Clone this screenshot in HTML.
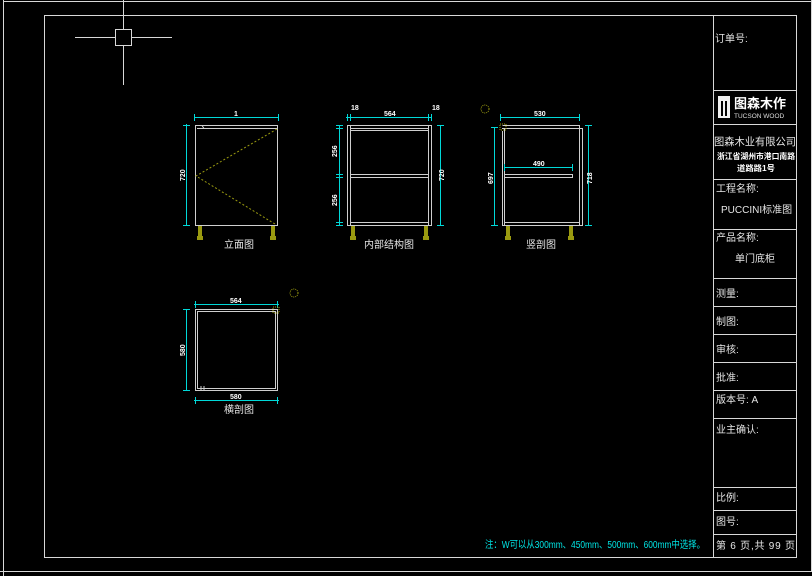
<!DOCTYPE html>
<html><head><meta charset="utf-8"><style>
html,body{margin:0;padding:0;background:#000;}
svg{display:block}
text{font-family:"Liberation Sans","Noto Sans CJK SC",sans-serif;fill:#e6e6e6;font-size:10px}
.c{fill:#00e5e5}
</style></head><body>
<svg width="812" height="576" viewBox="0 0 812 576" xmlns="http://www.w3.org/2000/svg">
<g fill="none" stroke="#d8d8d8" stroke-width="1">
<path d="M3.5 0V576M3.5 1.5H812M811.5 0V572"/>
<path d="M0 571.5H812"/>
<rect x="44.5" y="15.5" width="752" height="542"/>
<path d="M713.5 15V557"/>
<path d="M713 90.5H797M713 124.5H797M713 179.5H797M713 229.5H797M713 278.5H797M713 306.5H797M713 334.5H797M713 362.5H797M713 390.5H797M713 418.5H797M713 487.5H797M713 510.5H797M713 534.5H797"/>
<path d="M123.5 0V85M75 37.5H172"/>
<rect x="115.5" y="29.5" width="16" height="16" fill="#000"/>
</g>
<g fill="none" stroke="#cfcfcf" stroke-width="1">
<rect x="195.5" y="125.5" width="82" height="100"/>
<path d="M197 128.5H277M202 125.5L204 128.5"/>
<rect x="347.5" y="125.5" width="84" height="100"/>
<path d="M350.5 126V225M428.5 126V225M350 128.5H429M350 130.5H429M350 174.5H429M350 177.5H429M350 222.5H429"/>
<path d="M502.5 125.5H579.5V128.5H582.5V225.5H502.5V131M504.5 128V225M502 128.5H579M504 174.5H572.5V177.5H504M504 222.5H580M579.5 128V225"/>
<rect x="195.5" y="309.5" width="82" height="81"/>
<rect x="197.5" y="311.5" width="78" height="77"/>
<path d="M201 386V390M204 386V390"/>
</g>
<path d="M277 129L196 176L275 224" fill="none" stroke="#9a9a10" stroke-width="1" stroke-dasharray="2,2"/>
<g fill="#9a9a10">
<rect x="198" y="226" width="4" height="12"/><rect x="197" y="236" width="6" height="4"/>
<rect x="271" y="226" width="4" height="12"/><rect x="270" y="236" width="6" height="4"/>
<rect x="351" y="226" width="4" height="12"/><rect x="350" y="236" width="6" height="4"/>
<rect x="424" y="226" width="4" height="12"/><rect x="423" y="236" width="6" height="4"/>
<rect x="506" y="226" width="4" height="12"/><rect x="505" y="236" width="6" height="4"/>
<rect x="569" y="226" width="4" height="12"/><rect x="568" y="236" width="6" height="4"/>
</g>
<g fill="none" stroke="#00d8d8" stroke-width="1">
<path d="M194 117.5H279M194.5 114V121M278.5 114V121"/>
<path d="M186.5 124V226M183 125.5H190M183 225.5H190"/>
<path d="M346 117.5H432M347.5 114V121M350.5 114V121M431.5 114V121M428.5 114V121"/>
<path d="M339.5 125V226M336 125.5H343M336 128.5H343M336 174.5H343M336 177.5H343M336 222.5H343M336 225.5H343"/>
<path d="M440.5 125V226M437 125.5H444M437 225.5H444"/>
<path d="M500 117.5H580M500.5 114V121M579.5 114V121"/>
<path d="M494.5 127V226M491 127.5H498M491 225.5H498"/>
<path d="M504 167.5H573M504.5 164V171M572.5 164V171"/>
<path d="M588.5 125V226M585 125.5H592M585 225.5H592"/>
<path d="M194 304.5H279M195.5 301V308M277.5 301V308"/>
<path d="M186.5 309V391M183 309.5H190M183 390.5H190"/>
<path d="M194 400.5H279M195.5 397V404M277.5 397V404"/>
</g>
<g>
<text x="234" y="116" style="font-size:7px;font-weight:bold;fill:#fff">1</text>
<text x="384" y="116" style="font-size:7px;font-weight:bold;fill:#fff">564</text>
<text x="351" y="110" style="font-size:7px;font-weight:bold;fill:#fff">18</text>
<text x="432" y="110" style="font-size:7px;font-weight:bold;fill:#fff">18</text>
<text x="534" y="116" style="font-size:7px;font-weight:bold;fill:#fff">530</text>
<text x="533" y="166" style="font-size:7px;font-weight:bold;fill:#fff">490</text>
<text x="230" y="303" style="font-size:7px;font-weight:bold;fill:#fff">564</text>
<text x="230" y="399" style="font-size:7px;font-weight:bold;fill:#fff">580</text>
<text x="185" y="181" transform="rotate(-90 185 181)" style="font-size:7px;font-weight:bold;fill:#fff">720</text>
<text x="444" y="181" transform="rotate(-90 444 181)" style="font-size:7px;font-weight:bold;fill:#fff">720</text>
<text x="337" y="157" transform="rotate(-90 337 157)" style="font-size:7px;font-weight:bold;fill:#fff">256</text>
<text x="337" y="206" transform="rotate(-90 337 206)" style="font-size:7px;font-weight:bold;fill:#fff">256</text>
<text x="493" y="184" transform="rotate(-90 493 184)" style="font-size:7px;font-weight:bold;fill:#fff">697</text>
<text x="592" y="184" transform="rotate(-90 592 184)" style="font-size:7px;font-weight:bold;fill:#fff">718</text>
<text x="185" y="356" transform="rotate(-90 185 356)" style="font-size:7px;font-weight:bold;fill:#fff">580</text>
</g>
<g fill="none" stroke="#9a9a10" stroke-dasharray="1,1"><circle cx="485" cy="109" r="4"/><circle cx="294" cy="293" r="4"/><rect x="500" y="124" width="6" height="6"/><rect x="273" y="307" width="6" height="6"/></g>
<text x="224" y="248">立面图</text>
<text x="364" y="248">内部结构图</text>
<text x="526" y="248">竖剖图</text>
<text x="224" y="413">横剖图</text>
<text x="485" y="548" class="c" textLength="220" lengthAdjust="spacingAndGlyphs">注：W可以从300mm、450mm、500mm、600mm中选择。</text>
<text x="715" y="42">订单号:</text>
<rect x="718" y="96" width="12" height="22" fill="#f0f0f0"/>
<rect x="721" y="101" width="2" height="15" fill="#000"/><rect x="725" y="101" width="2" height="15" fill="#000"/>
<text x="734" y="108" style="font-size:13px;font-weight:bold;fill:#fff">图森木作</text>
<text x="734" y="118" style="font-size:6.5px;fill:#ddd">TUCSON WOOD</text>
<text x="714" y="145" style="font-size:10.5px" textLength="82" lengthAdjust="spacingAndGlyphs">图森木业有限公司</text>
<text x="717" y="159" style="font-size:8px;font-weight:bold;fill:#fff" textLength="78" lengthAdjust="spacingAndGlyphs">浙江省湖州市港口南路</text>
<text x="737" y="171" style="font-size:8px;font-weight:bold;fill:#fff" textLength="38" lengthAdjust="spacingAndGlyphs">道路路1号</text>
<text x="716" y="192">工程名称:</text>
<text x="721" y="213">PUCCINI标准图</text>
<text x="716" y="241">产品名称:</text>
<text x="735" y="262">单门底柜</text>
<text x="716" y="297">测量:</text>
<text x="716" y="325">制图:</text>
<text x="716" y="353">审核:</text>
<text x="716" y="381">批准:</text>
<text x="716" y="403">版本号: A</text>
<text x="716" y="433">业主确认:</text>
<text x="716" y="501">比例:</text>
<text x="716" y="525">图号:</text>
<text x="716" y="549" textLength="79" lengthAdjust="spacing">第 6 页,共 99 页</text>
</svg>
</body></html>
